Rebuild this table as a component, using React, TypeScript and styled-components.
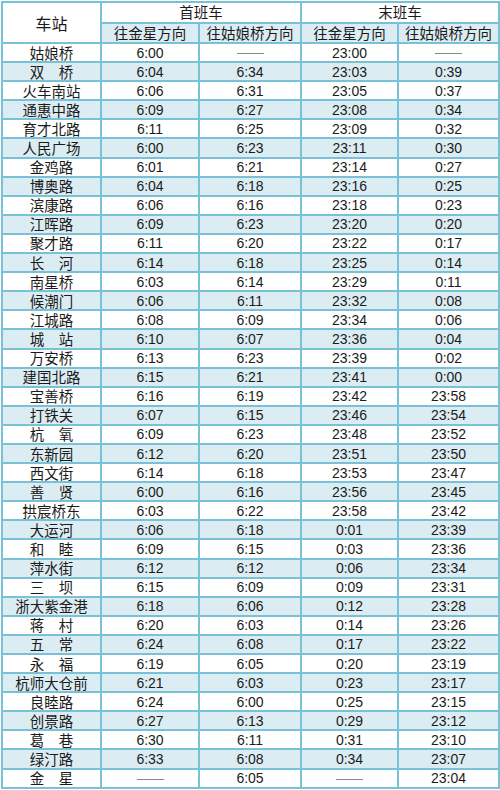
import React from 'react'
import styled, { createGlobalStyle } from 'styled-components'

const GlobalStyle = createGlobalStyle`
    html, body {
        margin: 0;
        padding: 0;
        background: #fff;
    }
    body {
        font-family: "Noto Sans CJK SC", "Liberation Sans", sans-serif;
        color: #1b1b1b;
    }
`;

const LINE = '#78c1d6';
const SHADE = '#dbedf3';

const Page = styled.div`
    width: 500px;
    padding: 1px 0 0 1px;
    box-sizing: border-box;
`;

const Table = styled.table`
    border-collapse: collapse;
    table-layout: fixed;
    width: 497px;
    border: 2px solid ${LINE};
`;

const HeadCell = styled.th<{ $shade?: boolean; $big?: boolean }>`
    border: 2px solid ${LINE};
    background: ${p => (p.$shade ? SHADE : '#fff')};
    font-weight: 400;
    font-size: ${p => (p.$big ? '16px' : '14.5px')};
    height: 18.5px;
    padding: 0;
    line-height: 16px;
    text-align: center;
    white-space: nowrap;
`;

const Row = styled.tr<{ $shade: boolean }>`
    background: ${p => (p.$shade ? SHADE : '#fff')};
`;

const StationCell = styled.td`
    border: 2px solid ${LINE};
    height: 17.1px;
    padding: 0;
    line-height: 16px;
    font-size: 14.5px;
    text-align: center;
    white-space: nowrap;
`;

const TimeCell = styled.td<{ $none?: boolean }>`
    border: 2px solid ${LINE};
    height: 17.1px;
    padding: 0;
    line-height: 16px;
    font-family: "Liberation Sans Narrow", "Liberation Sans", sans-serif;
    font-size: 14px;
    color: ${p => (p.$none ? '#777' : '#1b1b1b')};
    text-align: center;
    white-space: nowrap;
`;

const Dash = styled.span`
    display: inline-block;
    width: 27px;
    height: 0;
    border-top: 1px solid #888;
    vertical-align: middle;
`;

type Stop = [string, string, string, string, string];

const stops: Stop[] = [
    ['姑娘桥', '6:00', '', '23:00', ''],
    ['双　桥', '6:04', '6:34', '23:03', '0:39'],
    ['火车南站', '6:06', '6:31', '23:05', '0:37'],
    ['通惠中路', '6:09', '6:27', '23:08', '0:34'],
    ['育才北路', '6:11', '6:25', '23:09', '0:32'],
    ['人民广场', '6:00', '6:23', '23:11', '0:30'],
    ['金鸡路', '6:01', '6:21', '23:14', '0:27'],
    ['博奥路', '6:04', '6:18', '23:16', '0:25'],
    ['滨康路', '6:06', '6:16', '23:18', '0:23'],
    ['江晖路', '6:09', '6:23', '23:20', '0:20'],
    ['聚才路', '6:11', '6:20', '23:22', '0:17'],
    ['长　河', '6:14', '6:18', '23:25', '0:14'],
    ['南星桥', '6:03', '6:14', '23:29', '0:11'],
    ['候潮门', '6:06', '6:11', '23:32', '0:08'],
    ['江城路', '6:08', '6:09', '23:34', '0:06'],
    ['城　站', '6:10', '6:07', '23:36', '0:04'],
    ['万安桥', '6:13', '6:23', '23:39', '0:02'],
    ['建国北路', '6:15', '6:21', '23:41', '0:00'],
    ['宝善桥', '6:16', '6:19', '23:42', '23:58'],
    ['打铁关', '6:07', '6:15', '23:46', '23:54'],
    ['杭　氧', '6:09', '6:23', '23:48', '23:52'],
    ['东新园', '6:12', '6:20', '23:51', '23:50'],
    ['西文街', '6:14', '6:18', '23:53', '23:47'],
    ['善　贤', '6:00', '6:16', '23:56', '23:45'],
    ['拱宸桥东', '6:03', '6:22', '23:58', '23:42'],
    ['大运河', '6:06', '6:18', '0:01', '23:39'],
    ['和　睦', '6:09', '6:15', '0:03', '23:36'],
    ['萍水街', '6:12', '6:12', '0:06', '23:34'],
    ['三　坝', '6:15', '6:09', '0:09', '23:31'],
    ['浙大紫金港', '6:18', '6:06', '0:12', '23:28'],
    ['蒋　村', '6:20', '6:03', '0:14', '23:26'],
    ['五　常', '6:24', '6:08', '0:17', '23:22'],
    ['永　福', '6:19', '6:05', '0:20', '23:19'],
    ['杭师大仓前', '6:21', '6:03', '0:23', '23:17'],
    ['良睦路', '6:24', '6:00', '0:25', '23:15'],
    ['创景路', '6:27', '6:13', '0:29', '23:12'],
    ['葛　巷', '6:30', '6:11', '0:31', '23:10'],
    ['绿汀路', '6:33', '6:08', '0:34', '23:07'],
    ['金　星', '', '6:05', '', '23:04'],
];

const widths = [99, 98, 102, 97, 101];

function App() {
    return (
    <>
        <GlobalStyle />
        <Page>
            <Table>
                <colgroup>
                    {widths.map((w, i) => <col key={i} style={{ width: w }} />)}
                </colgroup>
                <thead>
                    <tr>
                        <HeadCell rowSpan={2} $big>车站</HeadCell>
                        <HeadCell colSpan={2}>首班车</HeadCell>
                        <HeadCell colSpan={2}>末班车</HeadCell>
                    </tr>
                    <tr>
                        <HeadCell $shade>往金星方向</HeadCell>
                        <HeadCell $shade>往姑娘桥方向</HeadCell>
                        <HeadCell $shade>往金星方向</HeadCell>
                        <HeadCell $shade>往姑娘桥方向</HeadCell>
                    </tr>
                </thead>
                <tbody>
                    {stops.map((s, i) => (
                        <Row key={s[0]} $shade={i % 2 === 1}>
                            <StationCell>{s[0]}</StationCell>
                            {s.slice(1).map((t, j) => (
                                <TimeCell key={j} $none={!t}>
                                    {t || <Dash />}
                                </TimeCell>
                            ))}
                        </Row>
                    ))}
                </tbody>
            </Table>
        </Page>
    </>
    )
}

export default App;
